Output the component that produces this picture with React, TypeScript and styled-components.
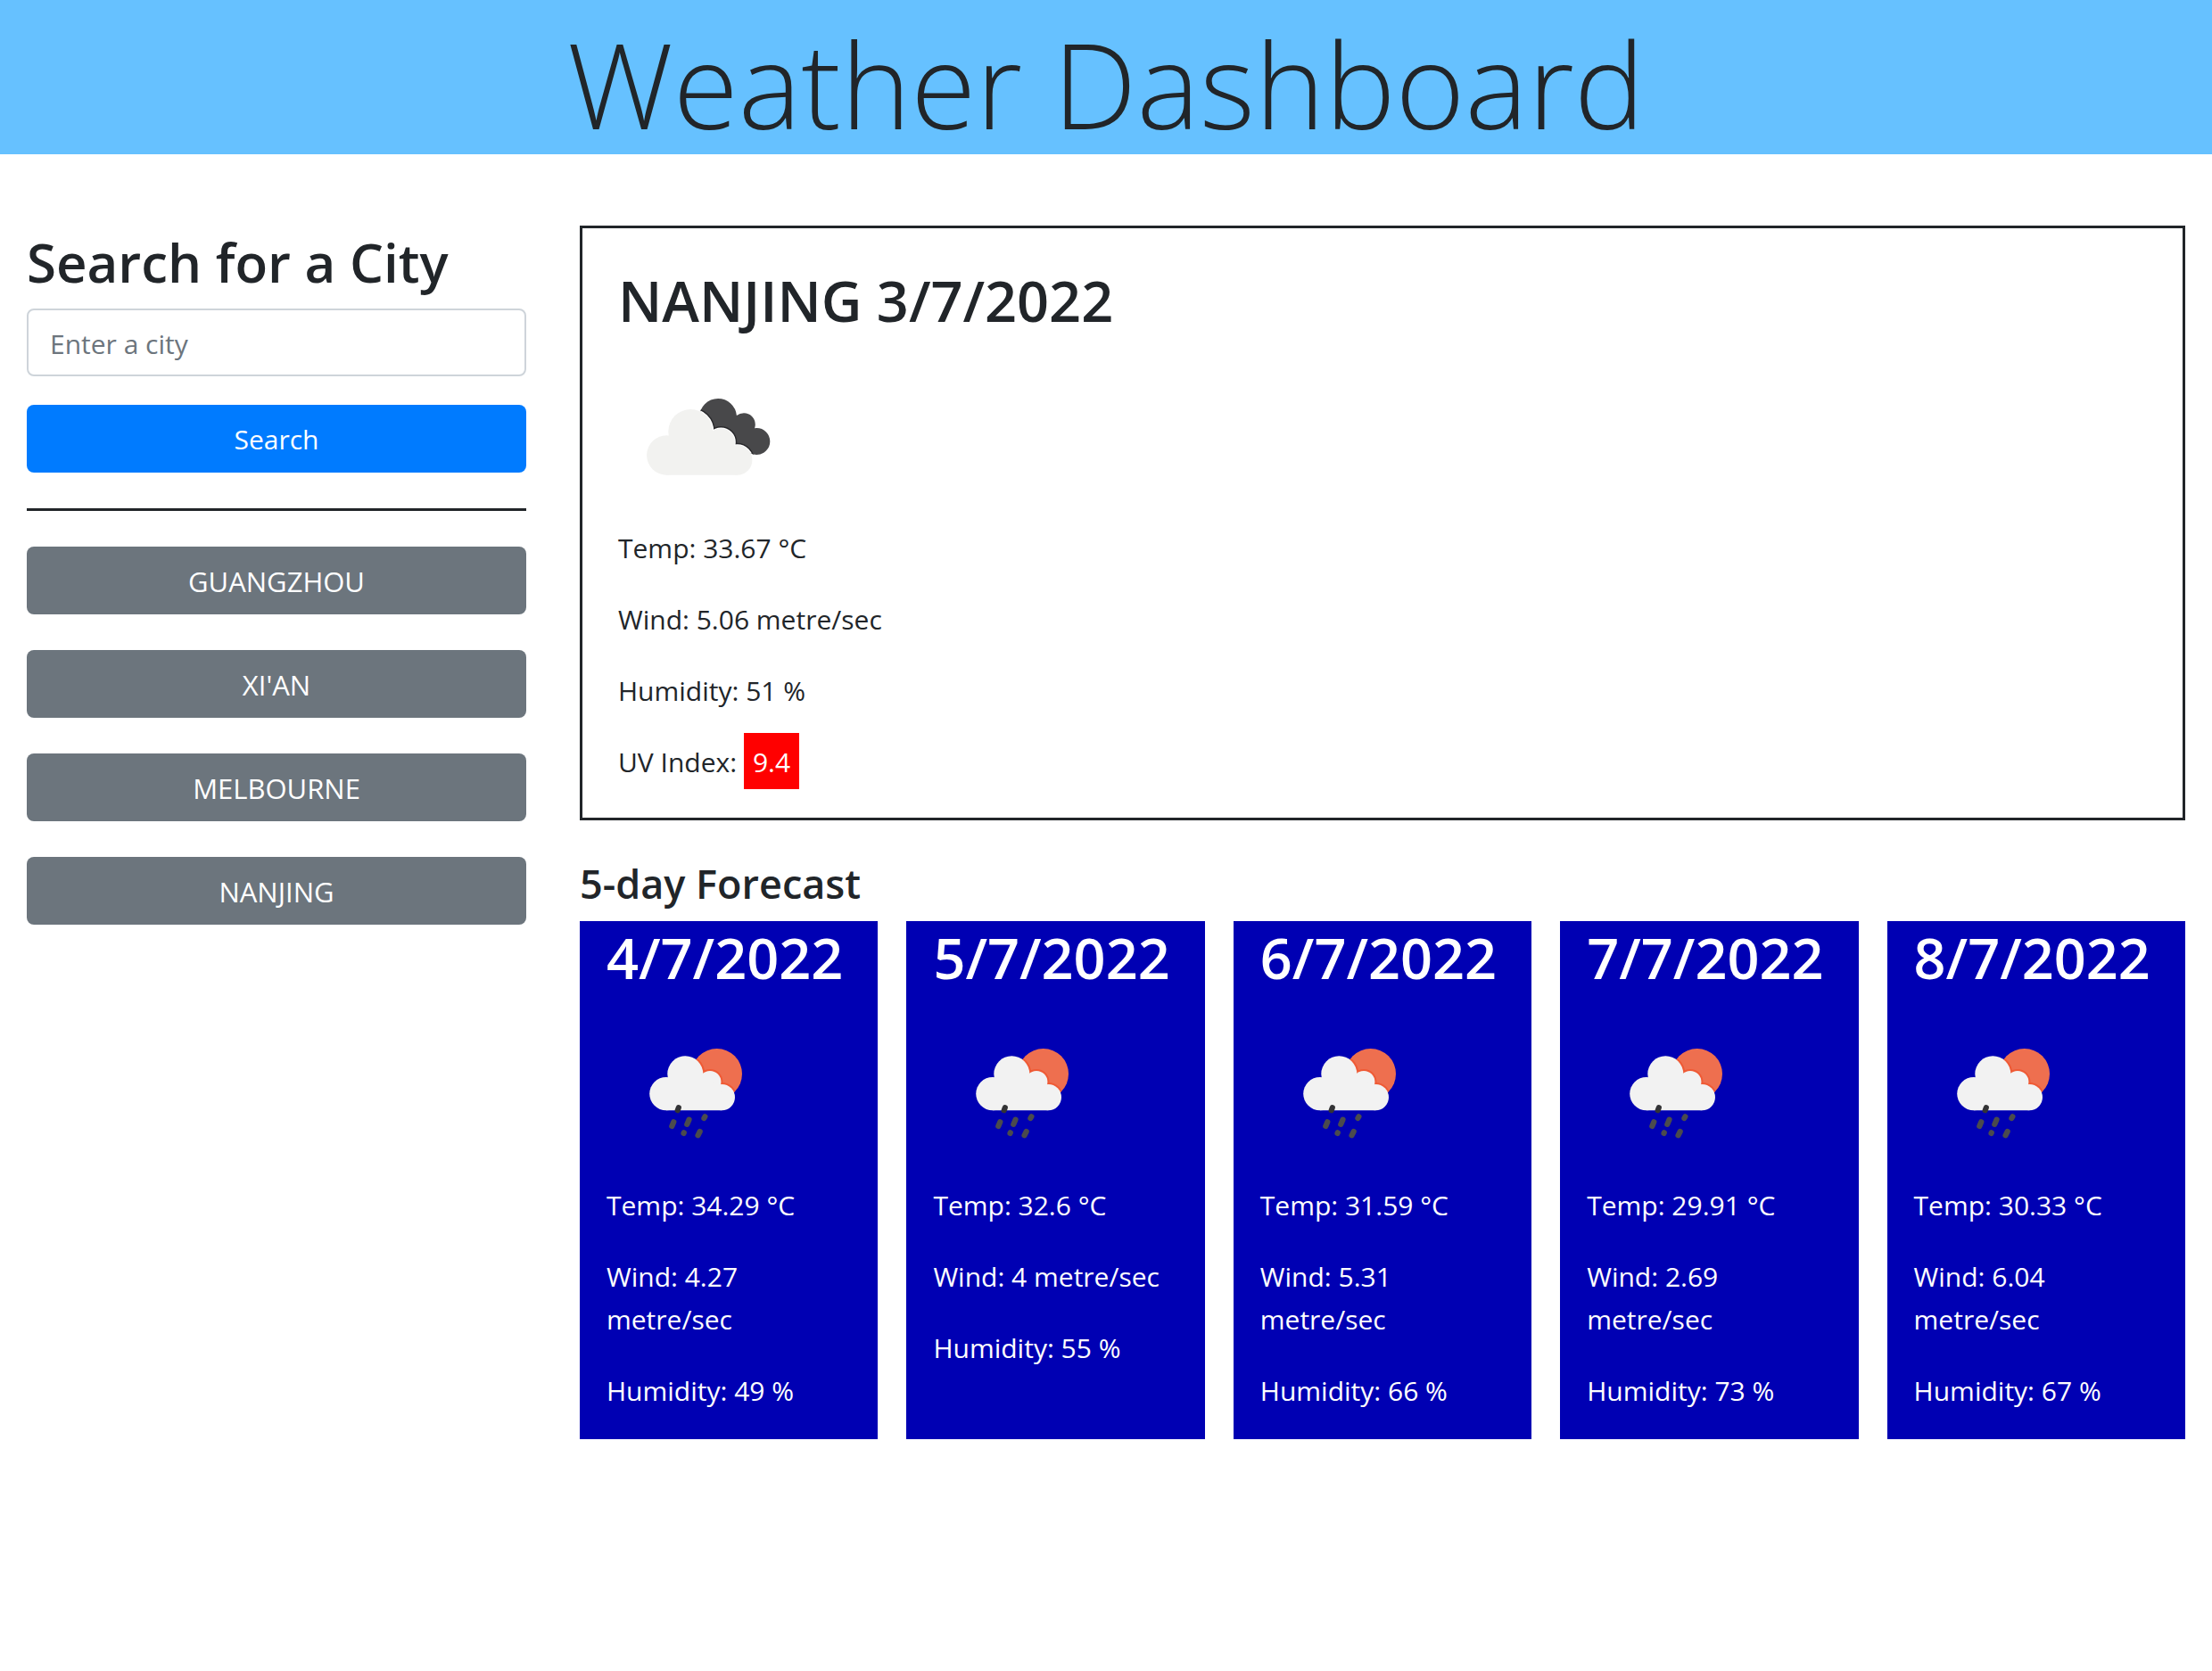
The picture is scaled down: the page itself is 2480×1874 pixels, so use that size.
import React, { useState } from "react";
import styled, { createGlobalStyle } from "styled-components";

const GlobalStyle = createGlobalStyle`
  *, *::before, *::after { box-sizing: border-box; }
  body {
    margin: 0;
    background: #fff;
    color: #212529;
    font-family: "Open Sans", "Noto Sans", sans-serif;
    font-size: 30px;
    line-height: 48px;
  }
`;

const Header = styled.header`
  padding-top: 14px;
  background: #66c1ff;
  text-align: center;
`;

const Title = styled.h1`
  margin: 0;
  font-size: 133px;
  font-weight: 300;
  line-height: 159px;
`;

const Layout = styled.div`
  display: grid;
  grid-template-columns: minmax(0, 3fr) minmax(0, 9fr);
  margin-top: 80px;
`;

const Sidebar = styled.aside`
  padding: 0 30px;
`;

const Main = styled.main`
  padding: 0 30px;
`;

const SearchLabel = styled.label`
  margin: 0 0 10px;
  font-size: 60px;
  font-weight: 600;
  line-height: 83px;
  white-space: nowrap;
`;

const Heading = styled.h2`
  margin: 0 0 12px;
  font-size: 63px;
  font-weight: 600;
  line-height: 81px;
  white-space: nowrap;
`;

const SearchForm = styled.form`
  display: flex;
  flex-direction: column;
  padding-bottom: 40px;
  border-bottom: 3px solid #212529;
`;

const CityInput = styled.input`
  width: 100%;
  height: 76px;
  margin-bottom: 32px;
  padding: 13px 24px 11px;
  border: 2px solid #ced4da;
  border-radius: 8px;
  background: #fff;
  color: #495057;
  font: inherit;
  &::placeholder { color: #6c757d; opacity: 1; }
`;

const Button = styled.button<{ $primary?: boolean }>`
  width: 100%;
  height: 76px;
  padding: 14px 24px 12px;
  border: 0;
  border-radius: 8px;
  background: ${(p) => (p.$primary ? "#007bff" : "#6c757d")};
  color: #fff;
  font: inherit;
  font-size: ${(p) => (p.$primary ? "30px" : "31px")};
  cursor: pointer;
`;

const History = styled.nav`
  display: flex;
  flex-direction: column;
  gap: 40px;
  padding-top: 40px;
`;

const Current = styled.section`
  padding: 40px 40px 38px;
  border: 3px solid #212529;
`;

const Readings = styled.div`
  display: flex;
  flex-direction: column;
  gap: 32px;
  padding-top: 2px;
`;

const Reading = styled.p`
  margin: 0;
`;

const UvBadge = styled.span`
  padding: 12px 10px 10px;
  background: #f00;
  color: #fff;
`;

const ForecastTitle = styled.h3`
  margin: 40px 0 12px;
  font-size: 45px;
  font-weight: 600;
  line-height: 61px;
`;

const Cards = styled.section`
  display: grid;
  grid-template-columns: repeat(5, minmax(0, 1fr));
  gap: 32px;
`;

const Card = styled.article`
  padding: 0 30px 30px;
  background: #0000b3;
  color: #fff;
`;

const Picture = styled.svg`
  display: block;
  width: 200px;
  height: 200px;
`;

const BrokenClouds = () => {
  const cloud = (
    <>
      <circle cx="54.3" cy="121.5" r="22.2" />
      <circle cx="81.3" cy="95" r="25" />
      <circle cx="115.3" cy="107" r="15.5" />
      <circle cx="133.7" cy="127" r="16.7" />
      <path d="M54.3 143.7V110L81 90L115 100L133.7 125V143.7Z" />
    </>
  );
  return (
    <Picture viewBox="0 0 200 200" role="img" aria-label="Broken clouds">
      <defs>
        <clipPath id="back-cloud">
          <circle cx="112" cy="79" r="21" />
          <circle cx="141" cy="87" r="12.8" />
          <circle cx="155.3" cy="106" r="15" />
          <path d="M112 78L141 84L155 100L155.3 121L135 115L105 100Z" />
        </clipPath>
      </defs>
      <g clipPath="url(#back-cloud)">
        <rect width="200" height="200" fill="#48484a" />
        <g fill="#28282b" stroke="#28282b" strokeWidth="5">{cloud}</g>
        <g fill="#fff" stroke="#fff" strokeWidth="2">{cloud}</g>
      </g>
      <g fill="#f2f2f0">{cloud}</g>
    </Picture>
  );
};

const SunRain = ({ id }: { id: string }) => {
  const cloud = (
    <>
      <circle cx="66.9" cy="100.6" r="18.7" />
      <circle cx="88.3" cy="78.3" r="20" />
      <circle cx="116" cy="87.3" r="12.4" />
      <circle cx="129.3" cy="104.6" r="14.7" />
      <path d="M66.9 119.3V90L88 75L116 82L129.3 100V119.3Z" />
    </>
  );
  return (
    <Picture viewBox="0 0 200 200" role="img" aria-label="Sun and rain">
      <defs>
        <clipPath id={id}>
          <circle cx="123.7" cy="78.3" r="28.3" />
        </clipPath>
      </defs>
      <g clipPath={`url(#${id})`}>
        <rect width="200" height="200" fill="#ee6f4f" />
        <g fill="#ef5a35" stroke="#ef5a35" strokeWidth="4">{cloud}</g>
      </g>
      <g fill="#f2f2f2">{cloud}</g>
      <g stroke="#4b4b4d" strokeWidth="6.2" strokeLinecap="round">
        <path d="M80.8 116.2L79.7 119.2" stroke="#333335" />
        <path d="M75.3 132.3L73.3 137" />
        <path d="M92.5 129.7L90.3 134.9" />
        <path d="M110.4 126.3L109.4 128" />
        <path d="M86.8 144.3L86.5 145" />
        <path d="M104.7 143L102.5 147.3" />
      </g>
    </Picture>
  );
};

const cities = ["GUANGZHOU", "XI'AN", "MELBOURNE", "NANJING"];

const forecast = [
  { date: "4/7/2022", temp: 34.29, wind: 4.27, humidity: 49 },
  { date: "5/7/2022", temp: 32.6, wind: 4, humidity: 55 },
  { date: "6/7/2022", temp: 31.59, wind: 5.31, humidity: 66 },
  { date: "7/7/2022", temp: 29.91, wind: 2.69, humidity: 73 },
  { date: "8/7/2022", temp: 30.33, wind: 6.04, humidity: 67 },
];

export default function App() {
  const [city, setCity] = useState("");
  return (
    <>
      <GlobalStyle />
      <Header>
        <Title>Weather Dashboard</Title>
      </Header>
      <Layout>
        <Sidebar>
          <SearchForm onSubmit={(e) => e.preventDefault()}>
            <SearchLabel htmlFor="city">Search for a City</SearchLabel>
            <CityInput
              id="city"
              type="text"
              placeholder="Enter a city"
              value={city}
              onChange={(e) => setCity(e.target.value)}
            />
            <Button type="submit" $primary>Search</Button>
          </SearchForm>
          <History>
            {cities.map((name) => (
              <Button key={name} type="button" onClick={() => setCity(name)}>{name}</Button>
            ))}
          </History>
        </Sidebar>
        <Main>
          <Current>
            <Heading>NANJING 3/7/2022</Heading>
            <BrokenClouds />
            <Readings>
              <Reading>Temp: 33.67 °C</Reading>
              <Reading>Wind: 5.06 metre/sec</Reading>
              <Reading>Humidity: 51 %</Reading>
              <Reading>UV Index: <UvBadge>9.4</UvBadge></Reading>
            </Readings>
          </Current>
          <ForecastTitle>5-day Forecast</ForecastTitle>
          <Cards>
            {forecast.map((day, i) => (
              <Card key={day.date}>
                <Heading>{day.date}</Heading>
                <SunRain id={`sun-${i}`} />
                <Readings>
                  <Reading>{`Temp: ${day.temp} °C`}</Reading>
                  <Reading>{`Wind: ${day.wind} metre/sec`}</Reading>
                  <Reading>{`Humidity: ${day.humidity} %`}</Reading>
                </Readings>
              </Card>
            ))}
          </Cards>
        </Main>
      </Layout>
    </>
  );
}
